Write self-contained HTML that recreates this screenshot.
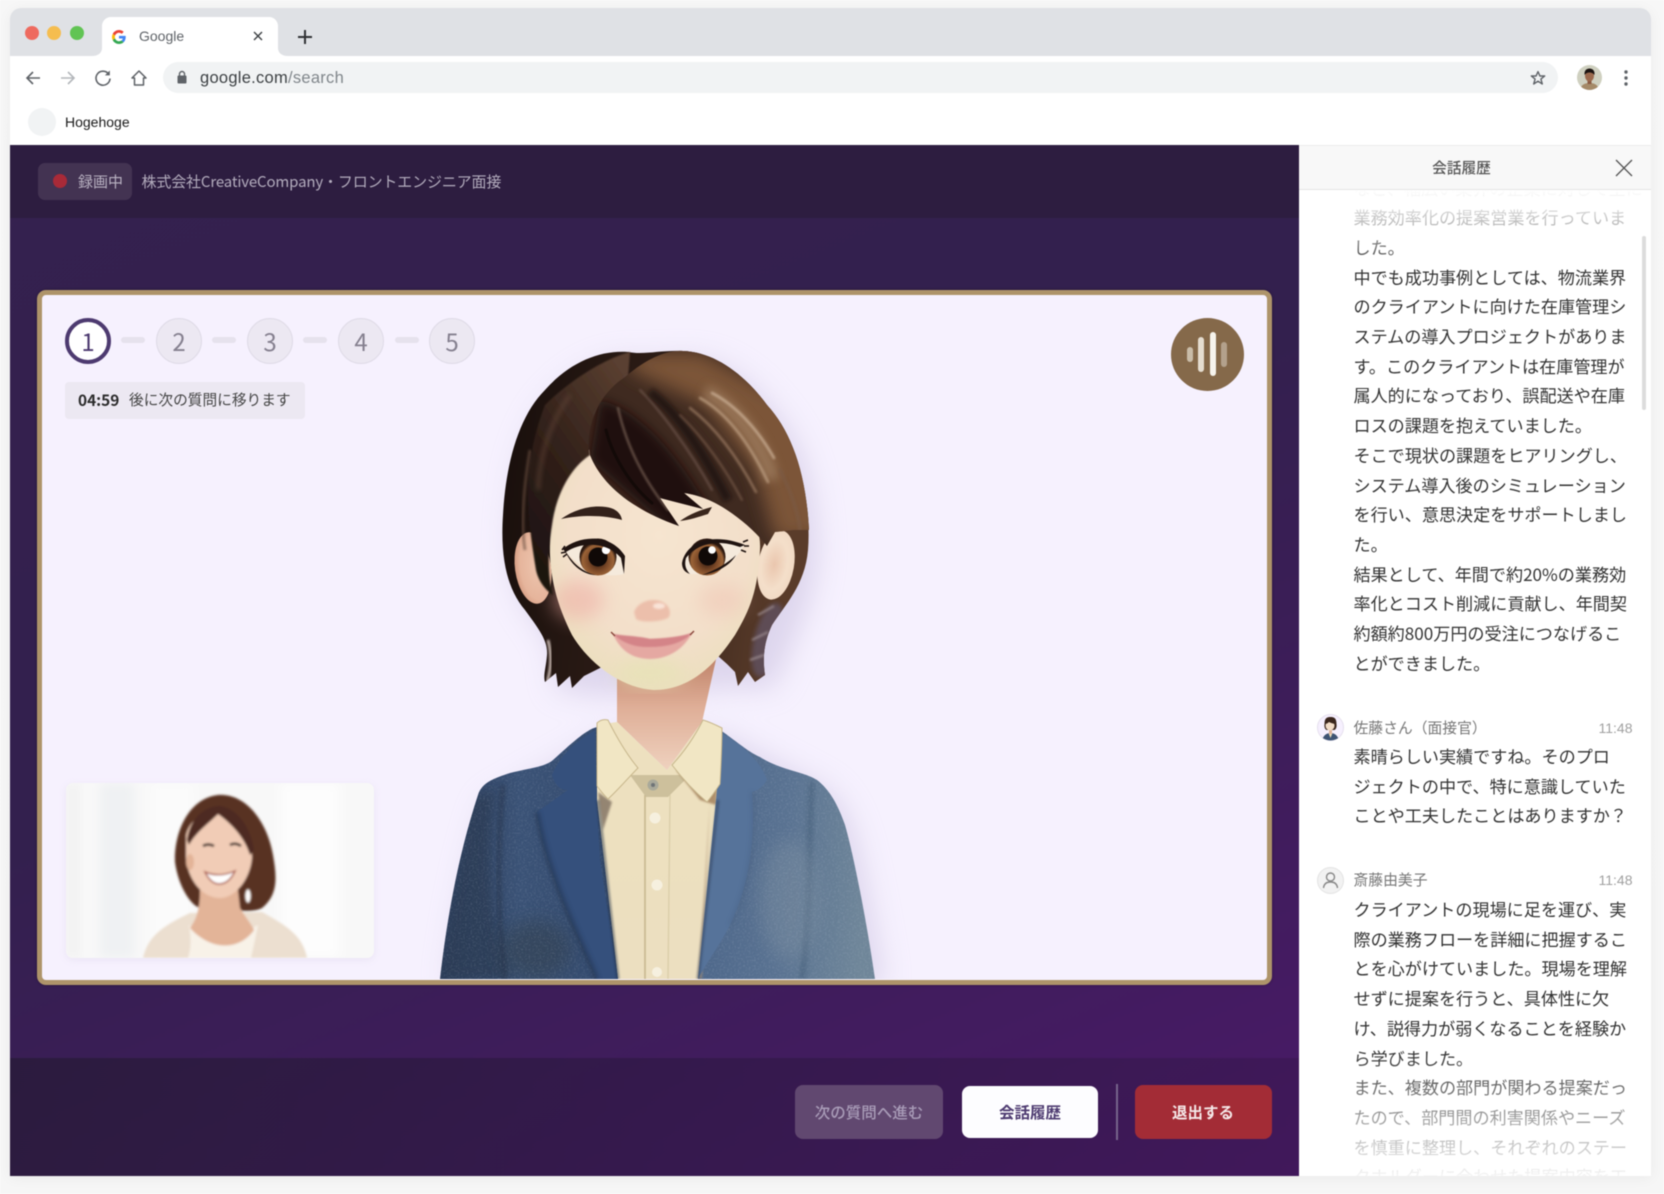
<!DOCTYPE html>
<html lang="ja"><head><meta charset="utf-8"><title>Google</title>
<style>
*{box-sizing:border-box;margin:0;padding:0}
html,body{width:1664px;height:1194px;overflow:hidden;background:#fff}
body{font-family:"Noto Sans CJK JP","Liberation Sans",sans-serif;position:relative}
#all{position:absolute;left:0;top:0;width:1664px;height:1194px;filter:blur(.5px);background:#fff}
.a{position:absolute}
.l{font-family:"Liberation Sans","Noto Sans CJK JP",sans-serif}
#bg{left:0;top:0;width:1664px;height:1194px;background:linear-gradient(#f7f7f7,#f6f6f6)}
#win{left:10px;top:8px;width:1641px;height:1168px;background:#fff;border-radius:11px 11px 0 0;box-shadow:0 2px 14px rgba(0,0,0,.05);overflow:hidden}
.c{white-space:nowrap}
.step{position:absolute;top:318px;width:46px;height:46px;border-radius:50%;background:#ece8f2;border:1px solid #dfdbe7;color:#85808f;font-size:24px;line-height:44px;text-align:center}
.dash{position:absolute;top:337px;width:24px;height:6px;border-radius:3px;background:#e6e2ed}
#chat{left:1300px;top:190px;width:351px;height:986px;overflow:hidden;background:#fff}
.m{position:absolute;left:53.5px;font-size:17.1px;line-height:29.7px;color:#333;white-space:nowrap}
.n{position:absolute;left:53.5px;font-size:14.8px;line-height:20px;color:#777;white-space:nowrap}
.t{position:absolute;right:18.5px;font-size:14px;line-height:20px;color:#a0a0a0}
.btn{position:absolute;top:1085px;height:54px;border-radius:8px;text-align:center;line-height:54px;font-size:15.5px;font-weight:500;white-space:nowrap}
</style></head><body><div id="all">
<div class="a" id="bg"></div>
<div class="a" id="win"></div>

<!-- tab strip -->
<div class="a" style="left:10px;top:8px;width:1641px;height:48px;background:#dfe1e5;border-radius:11px 11px 0 0"></div>
<div class="a" style="left:25px;top:26px;width:14px;height:14px;border-radius:50%;background:#ee6a5f"></div>
<div class="a" style="left:47px;top:26px;width:14px;height:14px;border-radius:50%;background:#f5bd4f"></div>
<div class="a" style="left:70px;top:26px;width:14px;height:14px;border-radius:50%;background:#61c454"></div>
<svg class="a" style="left:92px;top:17px" width="196" height="39" viewBox="0 0 196 39"><path d="M0 39C6 39 10 36 10 31V9C10 4 14 0 19 0H177C182 0 186 4 186 9V31C186 36 190 39 196 39Z" fill="#fff"/></svg>
<svg class="a" style="left:112px;top:29.5px" width="14" height="14" viewBox="0 0 48 48"><path fill="#EA4335" d="M24 9.5c3.54 0 6.71 1.22 9.21 3.6l6.85-6.85C35.9 2.38 30.47 0 24 0 14.62 0 6.51 5.38 2.56 13.22l7.98 6.19C12.43 13.72 17.74 9.5 24 9.5z"/><path fill="#4285F4" d="M46.98 24.55c0-1.57-.15-3.09-.38-4.55H24v9.02h12.94c-.58 2.96-2.26 5.48-4.78 7.18l7.73 6c4.51-4.18 7.09-10.36 7.09-17.65z"/><path fill="#FBBC05" d="M10.53 28.59c-.48-1.45-.76-2.99-.76-4.59s.27-3.14.76-4.59l-7.98-6.19C.92 16.46 0 20.12 0 24c0 3.88.92 7.54 2.56 10.78l7.97-6.19z"/><path fill="#34A853" d="M24 48c6.48 0 11.93-2.13 15.89-5.81l-7.73-6c-2.15 1.45-4.92 2.3-8.16 2.3-6.26 0-11.57-4.22-13.47-9.91l-7.98 6.19C6.51 42.62 14.62 48 24 48z"/></svg>
<div class="a l c" style="left:139px;top:28px;font-size:14px;line-height:16px;color:#5f6368">Google</div>
<svg class="a" style="left:252px;top:30px" width="12" height="12" viewBox="0 0 12 12"><path d="M2 2L10 10M10 2L2 10" stroke="#3c4043" stroke-width="1.4"/></svg>
<svg class="a" style="left:296px;top:28px" width="18" height="18" viewBox="0 0 18 18"><path d="M9 2V16M2 9H16" stroke="#303134" stroke-width="2"/></svg>

<!-- toolbar -->
<svg class="a" style="left:24px;top:68px" width="18" height="20" viewBox="0 0 18 20"><path d="M16 10H3M9 4L3 10L9 16" fill="none" stroke="#5f6368" stroke-width="1.6"/></svg>
<svg class="a" style="left:59px;top:68px" width="18" height="20" viewBox="0 0 18 20"><path d="M2 10H15M9 4L15 10L9 16" fill="none" stroke="#b4b7bb" stroke-width="1.6"/></svg>
<svg class="a" style="left:94px;top:69px" width="18" height="18" viewBox="0 0 18 18"><path d="M14.6 5A7 7 0 1 0 16 9.5" fill="none" stroke="#5f6368" stroke-width="1.6"/><path d="M15.8 1.5V6.4H10.9Z" fill="#5f6368"/></svg>
<svg class="a" style="left:130px;top:69px" width="18" height="18" viewBox="0 0 18 18"><path d="M9 2L2 9H4.5V16H13.5V9H16Z" fill="none" stroke="#5f6368" stroke-width="1.5" stroke-linejoin="round"/></svg>
<div class="a" style="left:163px;top:62px;width:1395px;height:31px;border-radius:16px;background:#f1f3f4"></div>
<svg class="a" style="left:177px;top:70px" width="10" height="14" viewBox="0 0 10 14"><path d="M2.5 6V4A2.5 2.5 0 0 1 7.5 4V6" fill="none" stroke="#5f6368" stroke-width="1.4"/><rect x="0.5" y="5.5" width="9" height="8" rx="1" fill="#5f6368"/></svg>
<div class="a l c" style="left:200px;top:68px;font-size:16.5px;line-height:20px;letter-spacing:.27px;color:#3c4043">google.com<span style="color:#80868b">/search</span></div>
<svg class="a" style="left:1530px;top:70px" width="16" height="16" viewBox="0 0 16 16"><path d="M8 1.6L9.9 6H14.7L10.9 9.1L12.3 14L8 11.2L3.7 14L5.1 9.1L1.3 6H6.1Z" fill="none" stroke="#5f6368" stroke-width="1.4" stroke-linejoin="round"/></svg>
<svg class="a" style="left:1577px;top:65px" width="25" height="25" viewBox="0 0 25 25"><defs><clipPath id="av"><circle cx="12.5" cy="12.5" r="12.5"/></clipPath></defs><g clip-path="url(#av)"><rect width="25" height="25" fill="#cfd0c0"/><path d="M3 25C4 19 9 18 12.5 18S21 19 22 25Z" fill="#a58a68"/><rect x="10.5" y="14" width="4" height="5" fill="#8a5a42"/><ellipse cx="12.5" cy="11" rx="4.5" ry="5.5" fill="#9c6a4e"/><path d="M7.5 10C7 5 10 3.5 12.5 3.5S18 5 17.5 10C16 8 14 7.5 12.5 7.5S9 8 7.5 10Z" fill="#1c1412"/></g></svg>
<svg class="a" style="left:1622px;top:69px" width="8" height="18" viewBox="0 0 8 18"><circle cx="4" cy="3" r="1.7" fill="#5f6368"/><circle cx="4" cy="9" r="1.7" fill="#5f6368"/><circle cx="4" cy="15" r="1.7" fill="#5f6368"/></svg>

<!-- bookmarks -->
<div class="a" style="left:28px;top:108px;width:28px;height:28px;border-radius:50%;background:#f1f3f4"></div>
<div class="a l c" style="left:65px;top:113px;font-size:14px;line-height:18px;color:#1a1a1a">Hogehoge</div>

<!-- app left -->
<div class="a" style="left:10px;top:145px;width:1289px;height:1031px;background:linear-gradient(158deg,#35214f 0,#33204e 45%,#4a1a68 100%)"></div>
<div class="a" style="left:10px;top:145px;width:1289px;height:73px;background:#2d1d40"></div>
<div class="a" style="left:10px;top:1058px;width:1289px;height:118px;background:linear-gradient(90deg,rgba(30,25,40,.5),rgba(30,20,45,.35) 50%,rgba(30,15,40,.2))"></div>
<div class="a" style="left:38px;top:163px;width:94px;height:37px;border-radius:7px;background:#433352"></div>
<div class="a" style="left:53px;top:174px;width:14px;height:14px;border-radius:50%;background:#a82a38"></div>
<div class="a c" style="left:78px;top:171px;font-size:15px;line-height:22px;color:#b9b2c2">録画中</div>
<div class="a c" style="left:141.5px;top:171px;font-size:15px;line-height:22px;letter-spacing:-.15px;color:#b3acbd">株式会社CreativeCompany・フロントエンジニア面接</div>

<!-- frame -->
<div class="a" style="left:37px;top:290px;width:1235px;height:695px;border-radius:9px;border:5.5px solid #ae946a;background:#f6f1fe;box-shadow:0 0 3px rgba(0,0,0,.3)"></div>

<!-- character -->
<svg class="a" style="left:0;top:0" width="1664" height="1194" viewBox="0 0 1664 1194">
<defs>
<clipPath id="fr"><rect x="43" y="296" width="1223" height="683"/></clipPath>
<clipPath id="hbc"><path d="M628,352C600,350 570,362 545,390C520,415 506,460 503,515C500,560 508,590 525,610C538,628 548,640 547,655C546,668 543,675 545,682L556,673L558,687L570,676L572,688L584,676L600,668L640,640L700,640L727,664L735,672L738,686L748,672L755,682L765,675C762,655 765,640 772,625C785,605 805,585 808,550C812,500 795,440 767,405C745,375 715,352 683,351C660,350 645,355 628,352Z"/></clipPath>
<clipPath id="bc"><path d="M625,377C598,395 586,425 590,455C600,480 625,507 679,526L660,498L703,509L684,493C700,495 715,502 727,510C742,520 756,532 767,546L775,532L795,530L809,530C806,470 790,430 767,405C745,375 715,352 683,351C665,350 645,360 625,377Z"/></clipPath>
<clipPath id="jc"><path d="M440,979C448,910 460,850 478,795C482,782 495,778 510,773C530,768 545,767 553,760C570,745 585,730 597,727L600,800L618,979ZM716,727C735,740 748,752 760,757C780,770 805,772 817,780C830,790 838,805 845,825C855,860 868,930 875,979L698,979L716,800Z"/></clipPath>
<filter id="b14" x="-30%" y="-30%" width="160%" height="160%"><feGaussianBlur stdDeviation="14"/></filter>
<filter id="b8" x="-40%" y="-40%" width="180%" height="180%"><feGaussianBlur stdDeviation="9"/></filter>
<filter id="b5" x="-40%" y="-40%" width="180%" height="180%"><feGaussianBlur stdDeviation="5"/></filter>
<filter id="b3" x="-40%" y="-40%" width="180%" height="180%"><feGaussianBlur stdDeviation="2.5"/></filter>
<filter id="b1" x="-20%" y="-20%" width="140%" height="140%"><feGaussianBlur stdDeviation="1"/></filter>
<filter id="o1" x="-5%" y="-5%" width="110%" height="110%"><feGaussianBlur stdDeviation=".9"/></filter>
<filter id="nz" x="0" y="0" width="100%" height="100%"><feTurbulence type="fractalNoise" baseFrequency=".55" numOctaves="2" seed="4"/><feColorMatrix values="0 0 0 0 .8  0 0 0 0 .85  0 0 0 0 .95  1.6 0 0 0 -.72"/></filter>
<linearGradient id="hb" x1="0" y1="0" x2="1" y2=".15"><stop offset="0" stop-color="#170e0b"/><stop offset=".5" stop-color="#2c1c16"/><stop offset="1" stop-color="#5a3c2a"/></linearGradient>
<linearGradient id="hl" x1=".8" y1="0" x2=".2" y2="1"><stop offset="0" stop-color="#5a3f30"/><stop offset=".5" stop-color="#32211a"/><stop offset="1" stop-color="#1c120f"/></linearGradient>
<radialGradient id="fc" cx=".52" cy=".38" r=".72"><stop offset="0" stop-color="#f6e5d0"/><stop offset=".6" stop-color="#f3dfca"/><stop offset=".88" stop-color="#ebdfbd"/><stop offset="1" stop-color="#dcc9a4"/></radialGradient>
<linearGradient id="nk" x1="0" y1="0" x2="0" y2="1"><stop offset="0" stop-color="#bd8066"/><stop offset=".45" stop-color="#dfae97"/><stop offset="1" stop-color="#efd2bf"/></linearGradient>
<linearGradient id="jl" x1="0" y1="0" x2="1" y2="0"><stop offset="0" stop-color="#2c3d5a"/><stop offset=".45" stop-color="#3a5276"/><stop offset="1" stop-color="#33496c"/></linearGradient>
<linearGradient id="jr" x1="0" y1="0" x2="1" y2=".1"><stop offset="0" stop-color="#4a6488"/><stop offset=".55" stop-color="#5a7392"/><stop offset="1" stop-color="#6f8699"/></linearGradient>
<linearGradient id="sh" x1="0" y1="0" x2="0" y2="1"><stop offset="0" stop-color="#eee1bf"/><stop offset="1" stop-color="#ecdfc0"/></linearGradient>
<radialGradient id="ir" cx=".5" cy=".6" r=".5"><stop offset="0" stop-color="#2a150c"/><stop offset=".55" stop-color="#7d4a28"/><stop offset=".85" stop-color="#9c6438"/><stop offset="1" stop-color="#2a170f"/></radialGradient>
<radialGradient id="erl" cx=".6" cy=".5" r=".6"><stop offset="0" stop-color="#edc4ad"/><stop offset=".75" stop-color="#e6b59c"/><stop offset="1" stop-color="#d79e84"/></radialGradient>
<radialGradient id="err" cx=".45" cy=".5" r=".6"><stop offset="0" stop-color="#eac6ae"/><stop offset=".6" stop-color="#f4dfca"/><stop offset="1" stop-color="#f1d8c2"/></radialGradient>
</defs>
<g clip-path="url(#fr)">
<!-- soft shadow -->
<g filter="url(#b14)" fill="#c4badc" opacity=".5" transform="translate(9,8)">
<path d="M628,352C600,350 570,362 545,390C520,415 506,460 503,515C500,560 508,590 525,610C538,628 548,640 547,682L600,688L727,680L765,680C790,620 812,580 808,530C806,470 790,430 767,405C745,375 715,352 683,351C660,350 645,355 628,352Z"/>
<path d="M440,979C448,910 460,850 478,795L597,727H716L817,780C830,790 838,805 845,825C855,860 868,930 875,979Z"/>
</g>
<!-- back hair -->
<path d="M628,352C600,350 570,362 545,390C520,415 506,460 503,515C500,560 508,590 525,610C538,628 548,640 547,655C546,668 543,675 545,682L556,673L558,687L570,676L572,688L584,676L600,668L640,640L700,640L727,664L735,672L738,686L748,672L755,682L765,675C762,655 765,640 772,625C785,605 805,585 808,550C812,500 795,440 767,405C745,375 715,352 683,351C660,350 645,355 628,352Z" fill="url(#hb)"/>
<g clip-path="url(#hbc)">
<ellipse cx="768" cy="640" rx="14" ry="38" fill="#5e4e58" filter="url(#b3)" opacity=".95" transform="rotate(14 768 640)"/>
<path d="M758,615L774,606M752,640L768,632M750,660L764,655" stroke="#948488" stroke-width="2" fill="none" filter="url(#b1)"/>
<path d="M548,640C552,655 551,670 547,682" stroke="#d8c8c0" stroke-width="2.5" fill="none" filter="url(#b1)"/>
</g>
<!-- ears -->
<ellipse cx="533" cy="568" rx="18" ry="36" fill="url(#erl)" transform="rotate(-8 533 568)"/>
<ellipse cx="776" cy="565" rx="18" ry="35" fill="url(#err)" transform="rotate(10 776 565)"/>
<!-- neck -->
<path d="M617,665L617,722L667,770L702,722L717,655Z" fill="url(#nk)"/>
<!-- jacket -->
<path d="M440,979C448,910 460,850 478,795C482,782 495,778 510,773C530,768 545,767 553,760C570,745 585,730 597,727L600,800L618,979Z" fill="url(#jl)"/>
<path d="M716,727C735,740 748,752 760,757C780,770 805,772 817,780C830,790 838,805 845,825C855,860 868,930 875,979L698,979L716,800Z" fill="url(#jr)"/>
<g clip-path="url(#jc)">
<path d="M495,790C488,840 485,910 512,979L440,979L470,800Z" fill="#2a3a52" opacity=".7" filter="url(#b5)"/>
<ellipse cx="535" cy="950" rx="36" ry="30" fill="#33404f" opacity=".6" filter="url(#b8)"/>
<path d="M503,785C498,840 496,900 505,979" stroke="#25344c" stroke-width="4" fill="none" opacity=".7" filter="url(#b3)"/>
<path d="M812,782C808,830 812,900 802,979" stroke="#46607c" stroke-width="5" fill="none" opacity=".7" filter="url(#b3)"/>
<ellipse cx="790" cy="900" rx="30" ry="60" fill="#7b8ea0" opacity=".45" filter="url(#b8)"/>
<rect x="440" y="725" width="440" height="255" filter="url(#nz)" opacity=".2"/>
</g>
<!-- shirt -->
<path d="M597,725L617,722L667,770L702,722L717,725L717,800L698,979L618,979L597,800Z" fill="url(#sh)"/>
<path d="M645,795V979" stroke="#cbbb93" stroke-width="1.8" fill="none"/>
<path d="M670,795L668,979" stroke="#dccfab" stroke-width="1.5" fill="none"/>
<path d="M630,775L690,775L668,797H646Z" fill="#c9bc98" opacity=".9"/>
<path d="M676,770L718,780L716,805L700,800Z" fill="#9a7550" opacity=".75" filter="url(#b1)"/>
<path d="M598,792L612,802L603,830Z" fill="#5a4a40" opacity=".6" filter="url(#b1)"/>
<path d="M710,800L702,979L698,979Z" fill="#b59a7a" opacity=".6" filter="url(#b1)"/>
<!-- lapels -->
<path d="M595,730C570,745 558,760 552,775C555,785 560,790 568,790L537,812C540,830 545,850 552,870C565,910 585,950 597,979H618L600,860L597,807Z" fill="#35507c"/>
<path d="M598,800L618,979" stroke="#1f2c42" stroke-width="3" opacity=".5" filter="url(#b1)"/>
<path d="M537,812C540,830 545,850 552,870C565,910 585,950 597,979" stroke="#22324e" stroke-width="4" fill="none" opacity=".7" filter="url(#b3)"/>
<path d="M722,733C742,745 760,760 767,780C762,788 758,790 752,792C755,830 752,880 730,925C720,945 705,965 698,979L716,800Z" fill="#56739a"/>
<path d="M718,800L698,979" stroke="#2e3e58" stroke-width="3" opacity=".5" filter="url(#b1)"/>
<path d="M752,792C755,830 752,880 730,925" stroke="#3f5678" stroke-width="3" fill="none" opacity=".35" filter="url(#b3)"/>
<!-- collars -->
<path d="M597,723C600,720 604,719 608,720C618,740 628,756 638,768C628,778 618,790 608,799C604,795 600,790 597,786Z" fill="#f1e6c4" stroke="#c8b78d" stroke-width="1"/>
<path d="M703,720C710,722 716,725 722,728C722,745 721,765 720,784C716,790 712,796 707,802C695,792 682,778 672,765C684,752 694,738 703,720Z" fill="#f1e6c4" stroke="#c8b78d" stroke-width="1"/>
<circle cx="653" cy="785" r="5.5" fill="#a9a99a"/><circle cx="653" cy="785" r="2" fill="#6f7477"/>
<circle cx="655" cy="818" r="5.5" fill="#f6f0df"/><circle cx="657" cy="885" r="5.5" fill="#f6f0df"/><circle cx="657" cy="972" r="5" fill="#f6f0df"/>
<!-- face -->
<path d="M552,515C546,560 552,595 572,635C588,662 620,688 654,690C690,690 715,665 735,635C750,610 758,590 760,550C762,520 740,490 700,470L600,440C575,460 555,490 552,515Z" fill="url(#fc)"/>
<ellipse cx="578" cy="600" rx="26" ry="20" fill="#eea9a0" opacity=".5" filter="url(#b8)"/>
<ellipse cx="722" cy="600" rx="24" ry="17" fill="#edb3a5" opacity=".3" filter="url(#b8)"/>
<ellipse cx="650" cy="672" rx="34" ry="12" fill="#e6e3b6" opacity=".8" filter="url(#b8)"/>
<!-- brows -->
<path d="M561,519C575,509 592,505 606,507C615,508 621,513 622,520C608,516 585,514 561,519Z" fill="#33211a"/>
<path d="M680,521C690,514 700,510 712,507L708,514C698,517 690,520 680,521Z" fill="#3a261c"/>
<!-- eyes -->
<path d="M566,552C578,538 610,535 624,556L624,574C608,578 585,574 566,552Z" fill="#f5eadc"/>
<circle cx="598" cy="557" r="18.5" fill="url(#ir)"/><circle cx="598" cy="557" r="9.5" fill="#100907"/><circle cx="606" cy="550" r="4.2" fill="#fff"/>
<path d="M563,549C578,536 610,532 625,556L624,574L621,558C608,542 582,541 566,552C574,565 585,573 596,575C584,575 572,566 566,553Z" fill="#1f1310"/>
<path d="M562,550L565,546M561,553L566,552M563,557L567,554" stroke="#1f1310" stroke-width="1.5"/>
<path d="M682,562C690,538 725,535 744,545C735,565 710,575 690,574Z" fill="#f5eadc"/>
<circle cx="707" cy="557" r="18.5" fill="url(#ir)"/><circle cx="708" cy="556" r="9.5" fill="#100907"/><circle cx="712" cy="550" r="3.8" fill="#fff"/>
<path d="M682,563C686,542 712,532 745,545L740,547C715,538 696,545 686,558C684,565 686,570 690,574C684,572 682,568 682,563ZM736,555C730,566 716,573 702,575C716,570 728,563 736,555Z" fill="#1f1310"/>
<path d="M743,542L748,540M744,546L749,546M741,550L746,552" stroke="#1f1310" stroke-width="1.5"/>
<!-- nose -->
<path d="M634,612C638,602 650,598 660,601C670,604 672,614 668,618C660,622 642,623 636,619Z" fill="#ecbfab" filter="url(#b1)"/>
<ellipse cx="659" cy="606" rx="6" ry="3" fill="#fbe8dd" opacity=".9" filter="url(#b1)"/>
<!-- mouth -->
<path d="M613,634C628,640 640,638 650,639C665,640 680,638 692,633C682,652 665,659 650,659C632,659 620,650 613,634Z" fill="#e5a8a2" filter="url(#o1)"/>
<path d="M613,634C625,636 640,636 650,639C665,638 680,637 692,633C680,646 660,647 648,647C632,647 622,642 613,634Z" fill="#d48488" filter="url(#o1)"/>
<path d="M611,632L615,636M694,631L690,635" stroke="#8c4a3f" stroke-width="1.5"/>
<!-- left front hair -->
<path d="M628,378C600,392 586,425 590,455C570,468 556,495 552,525C548,550 547,575 553,595C545,590 538,580 536,570C528,520 520,470 545,405C565,385 600,360 630,352Z" fill="url(#hl)" filter="url(#o1)"/>
<path d="M530,450C525,480 520,520 525,550" stroke="#6b5040" stroke-width="3" fill="none" opacity=".6" filter="url(#b1)"/>
<path d="M570,395C552,420 540,450 538,490" stroke="#6a4c3c" stroke-width="4" fill="none" opacity=".5" filter="url(#b3)"/>
<path d="M632,378L598,418" stroke="#585068" stroke-width="7" opacity=".75" filter="url(#b3)"/>
<!-- bangs / right dome -->
<path d="M625,377C598,395 586,425 590,455C600,480 625,507 679,526L660,498L703,509L684,493C700,495 715,502 727,510C742,520 756,532 767,546L775,532L795,530L809,530C806,470 790,430 767,405C745,375 715,352 683,351C665,350 645,360 625,377Z" fill="#3f2a20"/>
<g clip-path="url(#bc)">
<path d="M630,352H700L790,400L825,470L825,540H775L755,470L705,405L630,370Z" fill="#7b5539" filter="url(#b8)"/>
<path d="M600,400C640,410 680,455 715,520L670,530L590,460Z" fill="#1c1110" filter="url(#b5)" opacity=".9"/>
<path d="M650,392C675,410 702,450 728,500" stroke="#120b0c" stroke-width="9" fill="none" opacity=".65" filter="url(#b3)"/>
<path d="M705,392C735,408 760,440 772,480" stroke="#ae8e70" stroke-width="16" fill="none" opacity=".55" filter="url(#b5)"/>
<g fill="none" stroke-linecap="round">
<path d="M700,398C725,412 748,440 768,482" stroke="#bfa184" stroke-width="2.5" opacity=".8" filter="url(#b1)"/>
<path d="M712,393C735,405 757,428 774,458" stroke="#d4baa0" stroke-width="2.5" opacity=".75" filter="url(#b1)"/>
<path d="M690,408C712,425 735,452 756,492" stroke="#a5846a" stroke-width="2.5" opacity=".7" filter="url(#b1)"/>
<path d="M680,415C700,435 722,462 742,500" stroke="#8a6a56" stroke-width="2" opacity=".6" filter="url(#b1)"/>
<path d="M640,390C660,410 690,450 712,490" stroke="#8a7068" stroke-width="2" opacity=".5" filter="url(#b1)"/>
<path d="M618,408C625,440 640,475 668,510" stroke="#a48a78" stroke-width="2" opacity=".6" filter="url(#b1)"/>
<path d="M606,430C612,455 630,485 652,503" stroke="#120a08" stroke-width="3" opacity=".9"/>
<path d="M780,470C790,490 798,510 800,530" stroke="#7a5a44" stroke-width="4" opacity=".6" filter="url(#b1)"/>
</g>
</g>
</g>
</svg>

<!-- steps -->
<div class="step" style="left:65px;background:#fff;border:4px solid #4d3a70;color:#4d3a70;line-height:38px">1</div>
<div class="dash" style="left:121px"></div>
<div class="step" style="left:156px">2</div>
<div class="dash" style="left:212px"></div>
<div class="step" style="left:247px">3</div>
<div class="dash" style="left:303px"></div>
<div class="step" style="left:338px">4</div>
<div class="dash" style="left:395px"></div>
<div class="step" style="left:429px">5</div>
<div class="a" style="left:65px;top:381.5px;width:240px;height:37px;border-radius:4px;background:#ece8f2"></div>
<div class="a c" style="left:78px;top:389px;font-size:15.4px;line-height:22px;font-weight:700;color:#2b2b2b">04:59</div>
<div class="a c" style="left:129px;top:389px;font-size:14.7px;line-height:22px;color:#444">後に次の質問に移ります</div>

<!-- voice -->
<div class="a" style="left:1170.5px;top:318px;width:73px;height:73px;border-radius:50%;background:#85694a"></div>
<div class="a" style="left:1187px;top:347px;width:6px;height:15px;border-radius:3px;background:#c9bca8"></div>
<div class="a" style="left:1198px;top:337px;width:6px;height:35px;border-radius:3px;background:#e5ddd0"></div>
<div class="a" style="left:1209.5px;top:332px;width:6px;height:44px;border-radius:3px;background:#f6f3ec"></div>
<div class="a" style="left:1220.5px;top:342px;width:6px;height:25px;border-radius:3px;background:#b3a18c"></div>

<!-- pip -->
<svg class="a" style="left:56px;top:773px;overflow:visible" width="330" height="196" viewBox="56 773 330 196">
<defs>
<clipPath id="pc"><rect x="66" y="783" width="308" height="175" rx="7"/></clipPath>
<filter id="ps" x="-10%" y="-10%" width="120%" height="120%"><feGaussianBlur stdDeviation="4"/></filter>
<filter id="pb" x="-20%" y="-20%" width="140%" height="140%"><feGaussianBlur stdDeviation="1"/></filter>
<filter id="pw" x="-30%" y="-5%" width="160%" height="110%"><feGaussianBlur stdDeviation="5"/></filter>
</defs>
<rect x="66" y="785" width="308" height="175" rx="7" fill="#dcd4ea" opacity=".45" filter="url(#ps)"/>
<g clip-path="url(#pc)">
<rect x="66" y="783" width="308" height="175" fill="#f8f8f8"/>
<rect x="100" y="783" width="34" height="175" fill="#eff1f3" filter="url(#pw)"/>
<rect x="150" y="783" width="44" height="175" fill="#fbfbfb" filter="url(#pw)"/>
<rect x="280" y="783" width="60" height="175" fill="#fdfdfd" filter="url(#pw)"/>
<rect x="66" y="783" width="14" height="175" fill="#f2f2f2" filter="url(#pw)"/>
<g filter="url(#pb)">
<path d="M175,862C174,830 190,798 218,795C248,793 268,825 273,855C277,878 278,895 262,908C255,912 240,912 232,908L200,908C190,905 178,885 175,862Z" fill="#583323"/>
<path d="M143,958C148,935 165,925 190,913L262,912C285,925 303,935 307,958Z" fill="#ecdfd0"/>
<path d="M189,925C192,945 190,950 188,958H251C254,945 256,935 258,925L240,935H206Z" fill="#f8f2e8"/>
<path d="M200,890H238L240,908C246,918 252,925 254,930C240,950 212,952 190,928C196,920 200,910 200,890Z" fill="#e3b498"/>
<path d="M186,835C190,818 205,812 220,814C240,817 252,835 252,858C250,880 235,898 220,898C202,898 188,880 186,858Z" fill="#f1ccb6"/>
<path d="M187,840C190,818 205,806 220,806C236,808 250,825 254,850L250,855C245,838 232,824 218,814C208,824 196,832 189,845Z" fill="#4e2c20"/>
<ellipse cx="190" cy="862" rx="4" ry="8" fill="#e3b498"/>
<path d="M203,846Q208,843 214,846M230,845Q235,842 241,846" stroke="#33201a" stroke-width="2.5" fill="none"/>
<path d="M205,872Q219,878 235,871Q229,884 219,884Q211,884 205,872Z" fill="#fff" stroke="#ab5a4e" stroke-width="1.5"/>
<ellipse cx="248" cy="896" rx="3" ry="7" fill="#fff" stroke="#8b6a58"/>
</g>
</g>
</svg>

<!-- footer buttons -->
<div class="btn" style="left:795px;width:148px;background:#614870;color:#a99cb8">次の質問へ進む</div>
<div class="btn" style="left:962px;top:1086px;height:52px;line-height:52px;width:136px;background:#fdfdff;color:#4d3a70;font-weight:700">会話履歴</div>
<div class="a" style="left:1116px;top:1084px;width:1.5px;height:56px;background:#77648c"></div>
<div class="btn" style="left:1134.5px;width:137px;background:#a32c36;color:#f5e8e8;font-weight:700">退出する</div>

<!-- chat panel -->
<div class="a" style="left:1299px;top:145px;width:352px;height:45px;background:#f8f8f8;border-top:1px solid #ececec;border-bottom:1px solid #e4e4e4"></div>
<div class="a c" style="left:1299px;top:157px;width:325px;text-align:center;font-size:14.7px;line-height:22px;font-weight:500;color:#555">会話履歴</div>
<svg class="a" style="left:1615px;top:159px" width="18" height="18" viewBox="0 0 18 18"><path d="M1 1L17 17M17 1L1 17" stroke="#555" stroke-width="1.3"/></svg>
<div class="a" id="chat" >
<div class="m" style="top:-17.5px">など、幅広い業界の企業に対して主に
<br>業務効率化の提案営業を行っていま
<br>した。
<br>中でも成功事例としては、物流業界
<br>のクライアントに向けた在庫管理シ
<br>ステムの導入プロジェクトがありま
<br>す。このクライアントは在庫管理が
<br>属人的になっており、誤配送や在庫
<br>ロスの課題を抱えていました。
<br>そこで現状の課題をヒアリングし、
<br>システム導入後のシミュレーション
<br>を行い、意思決定をサポートしまし
<br>た。
<br>結果として、年間で約20%の業務効
<br>率化とコスト削減に貢献し、年間契
<br>約額約800万円の受注につなげるこ
<br>とができました。</div>

<svg class="a" style="left:17px;top:524px" width="27" height="27" viewBox="0 0 27 27"><defs><clipPath id="a1"><circle cx="13.5" cy="13.5" r="13"/></clipPath></defs><circle cx="13.5" cy="13.5" r="13" fill="#f6f0fe" stroke="#e6e0ee" stroke-width="1"/><g clip-path="url(#a1)"><path d="M5 27C6 21 10 19 13.5 19S21 21 22 27Z" fill="#3e5473"/><path d="M11.5 19L13.5 24L15.5 19Z" fill="#eee0bb"/><rect x="12" y="15" width="3" height="5" fill="#e0b59d"/><path d="M7.5 10C7.5 4 10 3 13.5 3S19.5 4 19.5 10C20 13 19 15 17.5 16H9.5C8 15 7 13 7.5 10Z" fill="#3a261c"/><ellipse cx="13" cy="11.5" rx="4.5" ry="5" fill="#f2dcc6"/><path d="M8.5 10C10 6 13 5.5 15 5.5C17 6.5 18 8.5 18 10C15 9.5 12 8 12 8C11 9 10 9.5 8.5 10Z" fill="#3a261c"/></g></svg>
<div class="n" style="top:528px">佐藤さん（面接官）</div>
<div class="t l" style="top:528px">11:48</div>
<div class="m" style="top:551px">素晴らしい実績ですね。そのプロ
<br>ジェクトの中で、特に意識していた
<br>ことや工夫したことはありますか？</div>

<svg class="a" style="left:17px;top:677px" width="27" height="27" viewBox="0 0 27 27"><circle cx="13.5" cy="13.5" r="13" fill="#f2f2f2" stroke="#e3e3e3"/><circle cx="13.5" cy="10" r="4" fill="none" stroke="#888" stroke-width="1.4"/><path d="M6.5 21C7 16.5 10 15 13.5 15S20 16.5 20.5 21" fill="none" stroke="#888" stroke-width="1.4"/></svg>
<div class="n" style="top:680px">斎藤由美子</div>
<div class="t l" style="top:680px">11:48</div>
<div class="m" style="top:704px">クライアントの現場に足を運び、実
<br>際の業務フローを詳細に把握するこ
<br>とを心がけていました。現場を理解
<br>せずに提案を行うと、具体性に欠
<br>け、説得力が弱くなることを経験か
<br>ら学びました。
<br>また、複数の部門が関わる提案だっ
<br>たので、部門間の利害関係やニーズ
<br>を慎重に整理し、それぞれのステー
<br>クホルダーに合わせた提案内容を工</div>
<div class="a" style="left:0;top:0;width:351px;height:76px;background:linear-gradient(rgba(255,255,255,1),rgba(255,255,255,.9) 15%,rgba(255,255,255,.62) 50%,rgba(255,255,255,0))"></div>
<div class="a" style="left:0;top:862px;width:351px;height:124px;background:linear-gradient(rgba(255,255,255,0),rgba(255,255,255,.6) 60%,rgba(255,255,255,.95))"></div>
<div class="a" style="left:342px;top:46px;width:4px;height:174px;border-radius:2px;background:#dcdcdc"></div>
</div>
</div></body></html>
